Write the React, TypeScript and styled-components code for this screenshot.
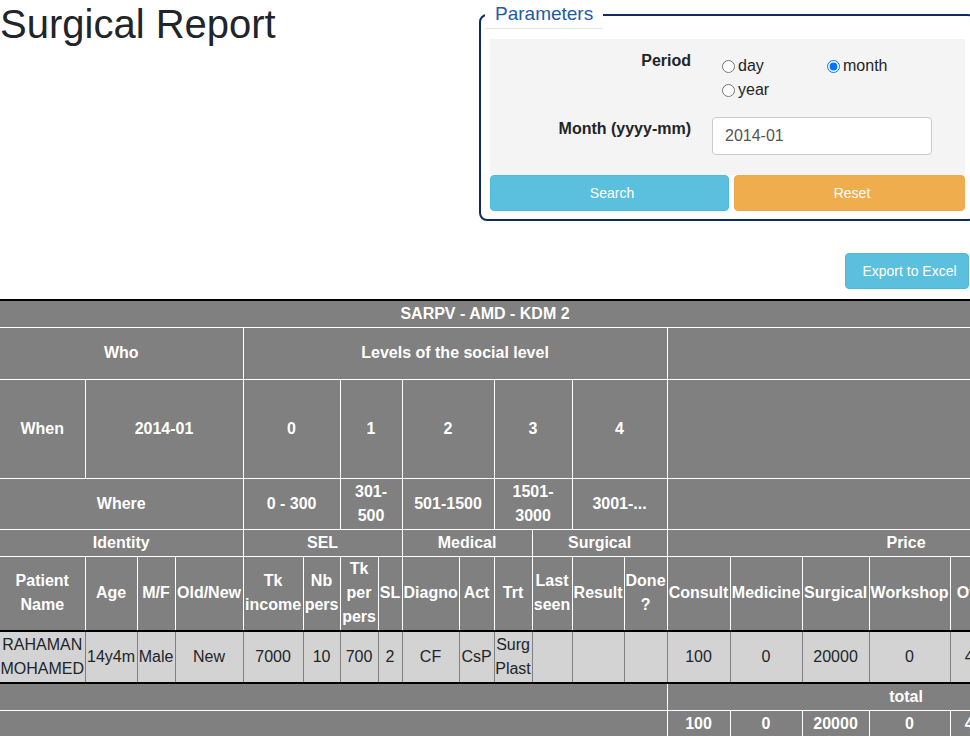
import React from 'react';
import styled, { createGlobalStyle } from 'styled-components';

const Global = createGlobalStyle`
  html, body { margin: 0; padding: 0; background: #fff; }
  body {
    font-family: "Liberation Sans", Arial, Helvetica, sans-serif;
    font-size: 16px;
    line-height: 1.5;
    color: #212529;
    overflow: hidden;
  }
  * { box-sizing: border-box; }
`;

const Page = styled.div`
  width: 970px;
  overflow: hidden;
`;

const TopBar = styled.div`
  display: flex;
  align-items: flex-start;
`;

const Title = styled.h1`
  flex: none;
  width: 479px;
  margin: 0;
  font-size: 40px;
  font-weight: 500;
  line-height: 48px;
  color: #212529;
`;

const Fieldset = styled.fieldset`
  flex: none;
  width: 497px;
  min-width: 0;
  margin: 0;
  padding: 10px 9px 8px;
  border: 2px solid #0b2a66;
  border-radius: 8px;
`;

const Legend = styled.legend`
  width: auto;
  margin-left: -5px;
  padding: 0 10px;
  font-size: 19px;
  line-height: 28px;
  color: #1c5ca6;
  border-bottom: 1px solid #e5e5e5;
`;

const Panel = styled.div`
  background: #f4f4f4;
  padding: 10px 0 20px;
`;

const FormRow = styled.div<{ $gap?: number }>`
  display: grid;
  grid-template-columns: 201px 1fr;
  column-gap: 21px;
  margin-top: ${(p) => p.$gap ?? 0}px;
`;

const FieldLabel = styled.label<{ $shift?: number }>`
  padding-top: ${(p) => p.$shift ?? 0}px;
  text-align: right;
  font-weight: 700;
  line-height: 24px;
  color: #212529;
`;

const RadioGroup = styled.div`
  display: grid;
  grid-template-columns: 105px 105px;
  margin: 5px 0 0 10px;
`;

const RadioItem = styled.label`
  display: flex;
  align-items: center;
  line-height: 24px;
  color: #212529;
`;

const Radio = styled.input`
  width: 13px;
  height: 13px;
  margin: 0 3px 0 0;
`;

const TextInput = styled.input`
  width: 220px;
  height: 38px;
  margin-top: 1px;
  padding: 6px 12px;
  border: 1px solid #ccc;
  border-radius: 4px;
  background: #fff;
  font-family: "Liberation Sans", Arial, sans-serif;
  font-size: 16px;
  color: #555;
  outline: none;
`;

const ButtonRow = styled.div`
  display: grid;
  grid-template-columns: 239px 231px;
  column-gap: 5px;
`;

const Button = styled.button<{ $variant: 'info' | 'warning' }>`
  height: 36px;
  padding: 0 0 0 5px;
  border-radius: 4px;
  border: 1px solid ${(p) => (p.$variant === 'info' ? '#4fbbdb' : '#eeaa4a')};
  background: ${(p) => (p.$variant === 'info' ? '#5bc0de' : '#f0ad4e')};
  color: #fff;
  font-family: "Liberation Sans", Arial, sans-serif;
  font-size: 14px;
  line-height: 20px;
  white-space: nowrap;
  cursor: pointer;
`;

const ExportRow = styled.div`
  display: flex;
  justify-content: flex-end;
  margin-top: 32px;
  padding-right: 1px;
`;

const ExportButton = styled(Button)`
  width: 124px;
`;

const TableArea = styled.div`
  margin-top: 10px;
  width: 970px;
  overflow: hidden;
`;

const TableTitle = styled.div`
  height: 29px;
  border-top: 2px solid #000;
  border-bottom: 1px solid #fff;
  background: #808080;
  color: #fff;
  font-weight: 700;
  line-height: 26px;
  text-align: center;
`;

const Table = styled.table`
  width: 1145px;
  table-layout: fixed;
  border-collapse: collapse;
  background: #808080;
  color: #fff;
`;

const Row = styled.tr<{ $h: number; $data?: boolean }>`
  height: ${(p) => p.$h}px;
  ${(p) => (p.$data ? 'border-top: 2px solid #000; border-bottom: 2px solid #000;' : '')}
`;

const Th = styled.th<{ $px?: number }>`
  padding: 0 ${(p) => p.$px ?? 1}px;
  border: 1px solid #fff;
  font-weight: 700;
  text-align: center;
  vertical-align: middle;
  line-height: 24px;
  &:first-child { border-left: 0; }
  tr:first-child > & { border-top: 0; }
`;

const Td = styled.td`
  padding: 0;
  border-left: 1px solid #808080;
  border-right: 1px solid #808080;
  background: #d3d3d3;
  color: #212529;
  font-weight: 400;
  text-align: center;
  vertical-align: middle;
  line-height: 24px;
  &:first-child { border-left: 0; }
`;

const colWidths = [85, 52, 38, 68, 60, 37, 38, 24, 57, 35, 38, 40, 52, 43, 63, 72, 67, 81, 56, 139];

const headers = [
  'Patient Name', 'Age', 'M/F', 'Old/New', 'Tk income', 'Nb pers', 'Tk per pers', 'SL',
  'Diagno', 'Act', 'Trt', 'Last seen', 'Result', 'Done ?', 'Consult', 'Medicine',
  'Surgical', 'Workshop', 'Other', 'Total',
];

const dataRow = [
  'RAHAMAN MOHAMED', '14y4m', 'Male', 'New', '7000', '10', '700', '2', 'CF', 'CsP',
  'Surg Plast', '', '', '', '100', '0', '20000', '0', '400', '20500',
];

const ranges = ['0 - 300', '301-500', '501-1500', '1501-3000', '3001-...'];

const totals = ['100', '0', '20000', '0', '400', '20500'];

export default function App() {
  return (
    <Page>
      <Global />
      <TopBar>
        <Title>Surgical Report</Title>
        <Fieldset>
          <Legend>Parameters</Legend>
          <Panel>
            <FormRow>
              <FieldLabel>Period</FieldLabel>
              <RadioGroup>
                <RadioItem>
                  <Radio type="radio" name="period" value="day" />
                  day
                </RadioItem>
                <RadioItem>
                  <Radio type="radio" name="period" value="month" defaultChecked />
                  month
                </RadioItem>
                <RadioItem>
                  <Radio type="radio" name="period" value="year" />
                  year
                </RadioItem>
              </RadioGroup>
            </FormRow>
            <FormRow $gap={14}>
              <FieldLabel $shift={1}>Month (yyyy-mm)</FieldLabel>
              <TextInput type="text" defaultValue="2014-01" />
            </FormRow>
          </Panel>
          <ButtonRow>
            <Button $variant="info">Search</Button>
            <Button $variant="warning">Reset</Button>
          </ButtonRow>
        </Fieldset>
      </TopBar>

      <ExportRow>
        <ExportButton $variant="info">Export to Excel</ExportButton>
      </ExportRow>

      <TableArea>
        <TableTitle>SARPV - AMD - KDM 2</TableTitle>
        <Table>
          <colgroup>
            {colWidths.map((w, i) => (
              <col key={i} style={{ width: w }} />
            ))}
          </colgroup>
          <tbody>
            <Row $h={51}>
              <Th colSpan={4}>Who</Th>
              <Th colSpan={10}>Levels of the social level</Th>
              <Th colSpan={6}></Th>
            </Row>
            <Row $h={99}>
              <Th>When</Th>
              <Th colSpan={3}>2014-01</Th>
              {['0', '1', '2', '3', '4'].map((l) => (
                <Th key={l} colSpan={2}>{l}</Th>
              ))}
              <Th colSpan={6}></Th>
            </Row>
            <Row $h={51}>
              <Th colSpan={4}>Where</Th>
              {ranges.map((r) => (
                <Th key={r} colSpan={2} $px={2}>{r}</Th>
              ))}
              <Th colSpan={6}></Th>
            </Row>
            <Row $h={27}>
              <Th colSpan={4}>Identity</Th>
              <Th colSpan={4}>SEL</Th>
              <Th colSpan={3}>Medical</Th>
              <Th colSpan={3}>Surgical</Th>
              <Th colSpan={6}>Price</Th>
            </Row>
            <Row $h={75}>
              {headers.map((h) => (
                <Th key={h}>{h}</Th>
              ))}
            </Row>
            <Row $h={52} $data>
              {dataRow.map((d, i) => (
                <Td key={i}>{d}</Td>
              ))}
            </Row>
            <Row $h={27}>
              <Th colSpan={14}></Th>
              <Th colSpan={6}>total</Th>
            </Row>
            <Row $h={27}>
              <Th colSpan={14}></Th>
              {totals.map((t, i) => (
                <Th key={i}>{t}</Th>
              ))}
            </Row>
          </tbody>
        </Table>
      </TableArea>
    </Page>
  );
}
